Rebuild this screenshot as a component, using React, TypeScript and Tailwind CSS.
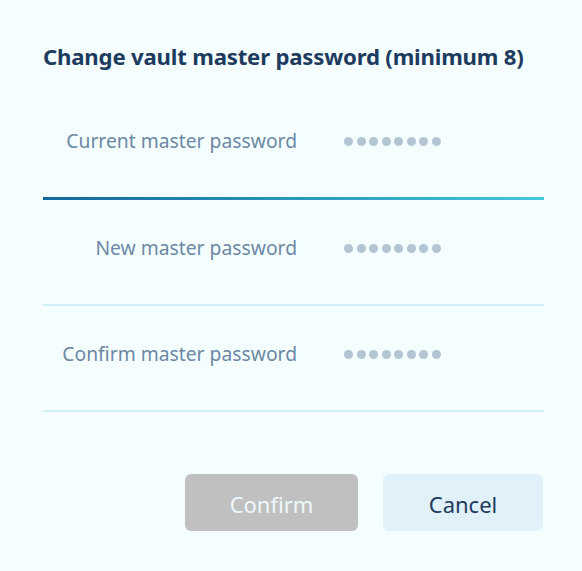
const rows = [
  { label: "Current master password", active: true },
  { label: "New master password", active: false },
  { label: "Confirm master password", active: false },
];

function Dots() {
  return (
    <div className="flex items-center gap-[3.5px]">
      {Array.from({ length: 8 }).map((_, i) => (
        <span key={i} className="block h-[9px] w-[9px] rounded-full bg-[#b3c5d3]" />
      ))}
    </div>
  );
}

export default function App() {
  return (
    <div
      className="h-[571px] w-[582px] bg-[#f4feff] pl-[43px] pr-[38px] pt-[41px]"
      style={{ fontFamily: '"Noto Sans", "Open Sans", sans-serif' }}
    >
      <h1 className="text-[22.2px] leading-[32px] font-bold tracking-[-0.2px] text-[#1d3b5e]">
        Change vault master password (minimum 8)
      </h1>

      <div className="mt-[20px] w-[501px]">
        {rows.map((row) => (
          <div key={row.label}>
            <div className="flex h-[104px] items-center pb-[8px]">
              <div className="w-[254px] text-right text-[19.3px] text-[#6d88a4]">{row.label}</div>
              <div className="ml-[47px]">
                <Dots />
              </div>
            </div>
            {row.active ? (
              <div className="h-[3px] bg-gradient-to-r from-[#14679a] to-[#44c8da]" />
            ) : (
              <div className="h-[2px] bg-[#d3eff8]" />
            )}
          </div>
        ))}
      </div>

      <div className="mt-[62px] flex w-[501px] justify-end gap-[25px] pr-[1px]">
        <button className="h-[57px] w-[173px] rounded-[6px] bg-[#c0c0c0] pt-[3px] text-[22px] text-[#eef8fc]">
          Confirm
        </button>
        <button className="h-[57px] w-[160px] rounded-[6px] bg-[#e1f1f9] pt-[3px] text-[22px] text-[#1d3b5e]">
          Cancel
        </button>
      </div>
    </div>
  );
}
